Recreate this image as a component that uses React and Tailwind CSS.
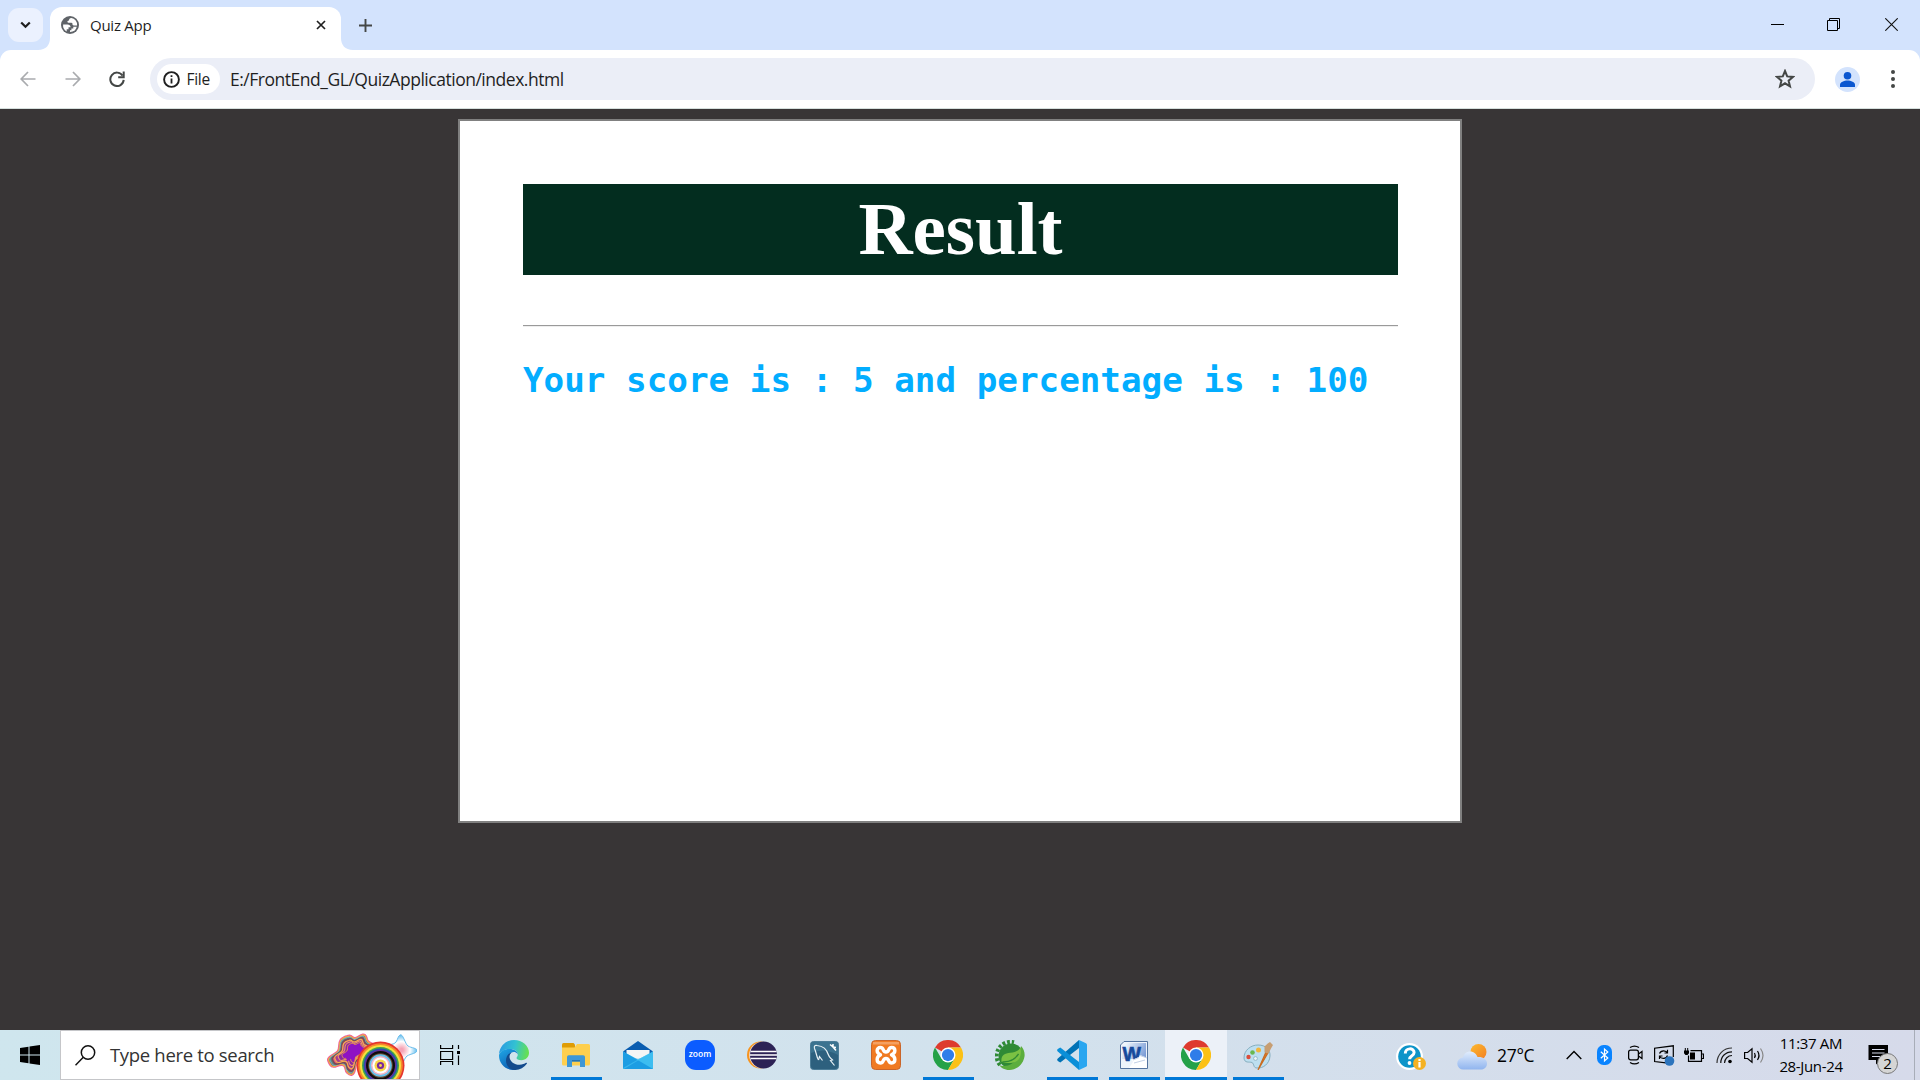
import React from "react";

const UI = "font-['Open_Sans','Noto_Sans',sans-serif]";

function Svg({ w, h, vb, className = "", children }) {
  return (
    <svg width={w} height={h} viewBox={vb || `0 0 ${w} ${h}`} className={`block shrink-0 ${className}`} fill="none">
      {children}
    </svg>
  );
}

/* ---------- Browser chrome ---------- */

function TabStrip() {
  return (
    <div className="flex h-[50px] shrink-0 items-start bg-[#d3e3fd]">
      <div className="ml-2 mt-2 flex h-[34px] w-[35px] items-center justify-center rounded-[11px] bg-[#ebf1fe]">
        <Svg w={11} h={8}>
          <path d="M1.2 1.4 5.5 5.8 9.8 1.4" stroke="#1f1f1f" strokeWidth="2.2" />
        </Svg>
      </div>
      <Svg w={12} h={12} className="-ml-[5px] mt-[38px] mr-0">
        <path d="M12 0v12H0C8 12 12 7 12 0Z" fill="#fff" />
      </Svg>
      <div className="mt-[7px] flex h-[43px] w-[291px] items-center rounded-t-[12px] bg-white pl-[11px] pr-[15px]">
        <Svg w={18} h={18} className="-mt-[7px]">
          <circle cx="9" cy="9" r="9" fill="#5f6368" />
          <path d="M10.300 1.900c-1.600.3-2.200 1-2.200 2 0 .9-1.700.4-1.700 1.500 0 1 .7 1.300 1.700 1.300h2.300c1 0 1.100.8 1.100 1.800 0 .9 1 .9 2 .9h2.600A6.900 6.900 0 0 0 10.300 1.900Z" fill="#fff" />
          <path d="M2.100 8.600h4.300c1.900 0 3.200 1 3.200 2.700H7.500v2h-1.800v2.200a7 7 0 0 1-3.600-6.900ZM9 15.900v-1.600h1.400v-1.800h1.900v-1.800h3.500A7 7 0 0 1 9 15.900Z" fill="#fff" />
        </Svg>
        <span className={`${UI} ml-[11px] -mt-[7px] grow whitespace-nowrap text-[15px] leading-5 tracking-[-0.25px] text-[#1f1f1f]`}>Quiz App</span>
        <Svg w={10} h={10} className="-mt-[7px]">
          <path d="m1 1 8 8M9 1 1 9" stroke="#1f1f1f" strokeWidth="1.7" />
        </Svg>
      </div>
      <Svg w={12} h={12} className="mt-[38px]">
        <path d="M0 0v12h12C4 12 0 7 0 0Z" fill="#fff" />
      </Svg>
      <Svg w={13} h={13} className="ml-[6px] mt-[19px]">
        <path d="M6.500 0v13M0 6.500h13" stroke="#444746" strokeWidth="1.900" />
      </Svg>
      <div className="ml-auto flex items-center pt-[18px] pr-[22px]">
        <Svg w={13} h={13}>
          <path d="M0 6.500h13" stroke="#000" />
        </Svg>
        <Svg w={13} h={13} className="ml-[43px]">
          <path d="M.5 2.500h10v10H.5zM2.500 2.500v-2h10v10h-2" stroke="#000" />
        </Svg>
        <Svg w={13} h={13} className="ml-[45px]">
          <path d="m.3.3 12.400 12.400M12.700.3.3 12.700" stroke="#111" strokeWidth="1.100" />
        </Svg>
      </div>
    </div>
  );
}

function Toolbar() {
  return (
    <div className="bg-[#d3e3fd]">
      <div className="flex h-[59px] items-center rounded-t-[11px] border-b border-[#d5dfdd] bg-white pl-[20px]">
        <Svg w={16} h={16}>
          <path d="M15.500 8H1.500M8 1 1.200 8 8 15" stroke="#a9abae" strokeWidth="1.700" />
        </Svg>
        <Svg w={16} h={16} className="ml-[29px]">
          <path d="M.5 8h14M8 1l6.800 7L8 15" stroke="#a9abae" strokeWidth="1.700" />
        </Svg>
        <Svg w={16} h={16} className="ml-[28px]">
          <path d="M13.600 4.600A6.700 6.700 0 1 0 14.700 8.900" stroke="#444746" strokeWidth="2" />
          <path d="M14.700.5v5.700H9.200" stroke="#444746" strokeWidth="2" />
        </Svg>
        <div className="ml-[25px] flex h-[42px] w-[1665px] items-center rounded-full bg-[#ebeef7] pl-[7px] pr-[20px]">
          <div className="flex h-[30px] w-[63px] items-center rounded-full bg-white pl-[5.500px]">
            <Svg w={17} h={17}>
              <circle cx="8.500" cy="8.500" r="7.400" stroke="#1f1f1f" strokeWidth="1.900" />
              <path d="M8.500 7.500v5M8.500 4.200V6" stroke="#1f1f1f" strokeWidth="1.800" />
            </Svg>
            <span className={`${UI} ml-[7px] text-[15.500px] font-medium leading-5 tracking-[-0.3px] text-[#1f1f1f]`}>File</span>
          </div>
          <span className={`${UI} ml-[10px] grow whitespace-nowrap text-[17.500px] leading-6 tracking-[-0.480px] text-[#1f1f1f]`}>
            E:/FrontEnd_GL/QuizApplication/index.html
          </span>
          <Svg w={20} h={20}>
            <path d="m10 2 2.200 5.400 5.800.5-4.400 3.800 1.400 5.700-5-3.100-5 3.100 1.400-5.700L2 7.900l5.800-.5Z" stroke="#444746" strokeWidth="2" />
          </Svg>
        </div>
        <Svg w={25} h={25} className="ml-[20px]">
          <circle cx="12.500" cy="12.500" r="12.500" fill="#d3e3fd" />
          <circle cx="12.500" cy="8.700" r="3.800" fill="#0b57d0" />
          <path d="M5 20v-2.200c0-2.600 4-4.200 7.500-4.200s7.500 1.600 7.500 4.200V20Z" fill="#0b57d0" />
        </Svg>
        <Svg w={4} h={18} className="ml-[30.500px]">
          <circle cx="2" cy="2" r="2" fill="#444746" />
          <circle cx="2" cy="9" r="2" fill="#444746" />
          <circle cx="2" cy="16" r="2" fill="#444746" />
        </Svg>
      </div>
    </div>
  );
}

/* ---------- Page ---------- */

function ResultPage() {
  return (
    <main className="flex grow items-start justify-center bg-[#383536] pt-[10px]">
      <section className="h-[704px] w-[1004px] border-2 border-[#808080] bg-white pl-[63px] pr-[62px] pt-[63px]">
        <h1 className="h-[91px] bg-[#032d1f] text-center font-['Liberation_Serif',serif] text-[75px] font-bold leading-[90px] text-white">Result</h1>
        <div className="mt-[50px] h-[2px] border-b border-t border-b-[#eeeeee] border-t-[#9a9a9a]" />
        <p className="mt-[33px] whitespace-nowrap font-['DejaVu_Sans_Mono',monospace] text-[34.250px] font-bold leading-[40px] text-[#02adff]">
          Your score is : 5 and percentage is : 100
        </p>
      </section>
    </main>
  );
}

/* ---------- Taskbar icons ---------- */

function Edge() {
  return (
    <Svg w={30} h={30}>
      <defs>
        <linearGradient id="eg1" x1="2" y1="6" x2="29" y2="12" gradientUnits="userSpaceOnUse">
          <stop stopColor="#2a9fe0" />
          <stop offset=".5" stopColor="#33c2d2" />
          <stop offset="1" stopColor="#66e052" />
        </linearGradient>
        <linearGradient id="eg2" x1="0" y1="10" x2="12" y2="30" gradientUnits="userSpaceOnUse">
          <stop stopColor="#1fa6e6" />
          <stop offset="1" stopColor="#0c5bb0" />
        </linearGradient>
      </defs>
      <path d="M0 14C.8 6 7 0 15 0c8.500 0 15 6 15 12.800 0 4.200-3.300 7.400-7.500 7.400-3.400 0-5-1.100-5-2.100 0-.8 1.300-1.400 1.300-3.500 0-3-3-5.700-7.600-5.700C5.500 8.900 1.200 11.500 0 14Z" fill="url(#eg1)" />
      <path d="M0 15.500C.2 11.500 5 8.900 10.500 8.900c5 0 8.300 2.600 8.300 5.500-1-1.900-2.800-2.400-4.100-2.400-3.500 0-5.200 3.200-5.200 6.500 0 5.500 4 9.500 9.500 9.500-1.200 1.300-3 2-5 2C6 29.500 0 23.500 0 15.500Z" fill="url(#eg2)" />
      <path d="M13 12.200c-2 1.300-2.600 3.300-2.400 5.200.5 4 4.500 7.300 10 7.300 2.800 0 5-.9 6.400-1.900.7-.4 1.300.2.8.9A15 15 0 0 1 15 30c-5-1-8-5-8-9.500 0-4 2.400-7.300 6-8.300Z" fill="#134a8c" />
    </Svg>
  );
}

function Folder() {
  return (
    <Svg w={28} h={24}>
      <path d="M0 1.500Q0 0 1.500 0h10l1.500 1.500V8H0Z" fill="#df9c05" />
      <path d="M0 4.500h12.500L15 1h11.500Q28 1 28 2.500V21q0 1.500-1.500 1.500h-25Q0 22.500 0 21Z" fill="#fecf4e" />
      <path d="M5 24V14q0-1.800 1.800-1.800h14.400q1.800 0 1.800 1.800v10h-5v-5.500h-8V24Z" fill="#3d97d6" />
      <path d="M10 18.500h8V17h-8z" fill="#2674ae" />
    </Svg>
  );
}

function Mail() {
  return (
    <Svg w={30} h={29}>
      <path d="M0 10.500 15 0l15 10.500L26 14H4Z" fill="#0a5db0" />
      <path d="M3.500 9h23v8H3.500z" fill="#f5f5f5" />
      <path d="M0 10.500 15 18.500l15-8V28H0Z" fill="#3dbdf0" />
      <path d="M0 10.500 30 28H1.500Q0 28 0 26.500Z" fill="#1d9de3" />
      <path d="M15 18.500 30 10.500 1 28H0v-1Z" fill="#47c5f4" opacity=".6" />
    </Svg>
  );
}

function Zoom() {
  return (
    <div className={`${UI} flex h-[30px] w-[30px] items-center justify-center rounded-[11px] bg-[#0b5cff] text-[8.500px] font-semibold leading-none text-white`}>
      <span className="-mt-[2px]">zoom</span>
    </div>
  );
}

function Eclipse() {
  return (
    <Svg w={30} h={28}>
      <circle cx="13.500" cy="14" r="13.500" fill="#f7941e" />
      <circle cx="15.500" cy="14" r="13.300" fill="#e9e4ee" />
      <circle cx="16.500" cy="14" r="13.500" fill="#2c2255" />
      <path d="M3.500 10.500h26M3 14h27M3.500 17.500h26" stroke="#fff" strokeWidth="1.700" />
    </Svg>
  );
}

function MySql() {
  return (
    <Svg w={29} h={29}>
      <rect x=".5" y=".5" width="28" height="28" rx="3" fill="#2d607e" stroke="#4b7c97" />
      <path d="M1 12Q14 6 28 14V4q0-3-3-3H4Q1 1 1 4Z" fill="#45809c" opacity=".6" />
      <path d="M8.500 19C6.500 16 6.500 12 4.500 7.500c-.7-2.500.5-3.500 2.500-3C13 5 17 9 18.500 14c.7 2.500 2.500 3.500 4 5l-2 .5 4 5" stroke="#e8f1f5" strokeWidth="1.200" />
      <path d="m8.500 19 1-3.500 3 4" stroke="#e8f1f5" strokeWidth="1.200" />
      <path d="m20 3.500 3 2.500 3 3.500M23 3v3l3 .5" stroke="#fff" strokeWidth="1.500" />
    </Svg>
  );
}

function Xampp() {
  return (
    <Svg w={30} h={30}>
      <rect x=".5" y=".5" width="29" height="29" rx="4" fill="#f07a22" stroke="#c9652a" />
      <path d="M2 2h26v2.500H2z" fill="#f7b07c" opacity=".7" />
      <path d="M9.500 14.800C5 13 5 7.500 9.500 7.500c3.500 0 2 4.500 5.500 4.500s2-4.500 5.500-4.500c4.500 0 4.500 5.500 0 7.300 4.500 1.800 4.500 8.200 0 8.200-3.500 0-2-4.500-5.500-4.500s-2 4.500-5.500 4.500c-4.500 0-4.500-6.400 0-8.200Z" stroke="#fff" strokeWidth="3.400" strokeLinejoin="round" />
    </Svg>
  );
}

function Chrome() {
  return (
    <Svg w={30} h={30} vb="0 0 48 48">
      <path d="M24 24 3.200 12A24 24 0 0 1 44.800 12H24Z" fill="#de3b2e" />
      <path d="M3.200 12A24 24 0 0 0 24 48L34.400 30 24 24 13.600 30Z" fill="#24a148" />
      <path d="M24 48A24 24 0 0 0 44.800 12H24l10.400 18Z" fill="#fbc116" />
      <circle cx="24" cy="24" r="12" fill="#fff" />
      <circle cx="24" cy="24" r="9.800" fill="#2f7de9" />
    </Svg>
  );
}

function Spring() {
  return (
    <Svg w={30} h={30}>
      <path d="M5 25A14 14 0 0 1 19 2.300" stroke="#2f8a35" strokeWidth="4" strokeDasharray="2.800 1.900" />
      <circle cx="16" cy="16" r="12.500" fill="#2f8a35" />
      <path d="M26 6c3 3 4 7 3.500 10.500C28 25 21 30 14.500 30 9 30 6 27.500 4 25 12 28 24 24 26 6Z" fill="#5cae3e" />
      <path d="M25.500 7.500c1.500 8-1 14-8 15.300-4 .6-8 .2-11-1-.8-6 2.800-8.500 8.800-9C20 12.300 23.500 11 25.500 7.500Z" fill="#7ac143" />
      <path d="M7.500 21.800c6.500.3 12.500-2 16-8" stroke="#2f8a35" strokeWidth="1.400" />
    </Svg>
  );
}

function VsCode() {
  return (
    <Svg w={30} h={30}>
      <path d="M22 0v8L3.300 22.500.8 21q-1.300-1.200 0-2.500Z" fill="#0072b5" />
      <path d="M22 30v-8L3.300 7.500.8 9q-1.300 1.200 0 2.500Z" fill="#0a8fd8" />
      <path d="m22 0 7 3.200q1 .5 1 1.500v20.600q0 1-1 1.500L22 30Z" fill="#2aa6f0" />
    </Svg>
  );
}

function Word() {
  return (
    <Svg w={28} h={28}>
      <defs>
        <linearGradient id="wd" x1="0" y1="0" x2="28" y2="16" gradientUnits="userSpaceOnUse">
          <stop offset=".2" stopColor="#eef5fc" />
          <stop offset="1" stopColor="#6a8fd0" />
        </linearGradient>
      </defs>
      <path d="M4 .5h23.500v27H.5V4Z" fill="#eef4fb" stroke="#55749f" />
      <path d="M4.500 2H26v16H2V4.500Z" fill="url(#wd)" />
      <text x="2.500" y="19.500" fontFamily="Liberation Sans" fontWeight="700" fontSize="19.500" fill="#164a9c" stroke="#164a9c" strokeWidth=".6">W</text>
      <path d="m12 19 7-3 1-2 7 3v10H9l4-6Z" fill="#fff" />
      <path d="m20 14.500 7 2.500M13 19l6-2.500M14 22l11-3" stroke="#c3d1e6" />
    </Svg>
  );
}

function Paint() {
  return (
    <Svg w={30} h={29}>
      <path d="M1 17C1 9 8 4 15 4c8 0 12.500 5 12 11-.5 8-7 12.500-13 12-4 0-2.500-4-5-5.500C6 20.500 1.500 22.500 1 17Z" fill="#bddff0" stroke="#85aebf" />
      <circle cx="5.500" cy="16" r="2.200" fill="#db4d3c" />
      <circle cx="9.500" cy="11.500" r="2.300" fill="#69b851" />
      <circle cx="15.500" cy="9" r="2.500" fill="#f2b63c" />
      <circle cx="12.500" cy="17.500" r="1.900" fill="#eef7fb" stroke="#86aec0" strokeWidth=".8" />
      <path d="m15 29 8-18 2 .8Z" fill="#d97b2b" stroke="#c96d22" strokeWidth="1.200" />
      <path d="m21.500 11.500 0-6 3.200-3L27 1l3 3-2 3.500-2.500 5Z" fill="#c79e72" />
    </Svg>
  );
}

const APPS = [
  [Edge, "none"], [Folder, "open"], [Mail, "none"], [Zoom, "none"], [Eclipse, "none"], [MySql, "none"], [Xampp, "none"],
  [Chrome, "open"], [Spring, "none"], [VsCode, "open"], [Word, "open"], [Chrome, "active"], [Paint, "open"],
];

function AppButton({ Icon, state }) {
  return (
    <div className={`flex h-[50px] w-[62px] flex-col items-center ${state === "active" ? "bg-[#ecf1f8]" : ""}`}>
      <div className="flex h-[47px] items-center justify-center pt-[3px]">
        <Icon />
      </div>
      {state !== "none" && <div className={`h-[3px] bg-[#0078d7] ${state === "active" ? "w-full" : "w-[51px]"}`} />}
    </div>
  );
}

const BLOB =
  "M20 4C25 2 24 7 28 6S36 0 38 4 38 9 43 11 50 16 47 22 38 24 33 27 28 31 27 37 23 43 20 40 20 33 15 32 6 37 3 32 0 26 5 23 12 19 12 14 13 6 20 4Z";

function SearchArt() {
  return (
    <Svg w={92} h={49}>
      <defs>
        <radialGradient id="star">
          <stop offset=".1" stopColor="#f5a3b5" />
          <stop offset=".55" stopColor="#fff" />
          <stop offset="1" stopColor="#5fbcee" />
        </radialGradient>
      </defs>
      <path d="M75 4c3-2 5 9 8 11s10 2 9 5-9 3-11 6-4 9-7 8-2-8-5-11-9-4-8-7 8-2 10-5 2-6 4-7Z" fill="url(#star)" stroke="#6bbdec" />
      <g transform="translate(2.500 1.500)">
        <path d={BLOB} fill="#ee5ba0" stroke="#ee5ba0" strokeWidth="3" />
        <path d={BLOB} fill="#7c6a72" stroke="#f3a545" strokeWidth="1.400" />
        <path transform="translate(1.500 1.300) scale(.93)" d={BLOB} fill="#5f7f7a" stroke="#6cb8c9" strokeWidth="1" />
        <path transform="translate(4 3.300) scale(.84)" d={BLOB} fill="#e9607c" stroke="#7a4a58" strokeWidth="2" />
        <path transform="translate(6.500 5) scale(.74)" d={BLOB} fill="#a33a94" stroke="#f5b04a" strokeWidth="1.600" />
        <path transform="translate(10 7) scale(.62)" d={BLOB} fill="#8a2a9c" stroke="#f0986a" strokeWidth="1.700" />
        <path transform="translate(14 9) scale(.5)" d={BLOB} fill="#8f12c4" stroke="#f3a545" strokeWidth="1.600" />
        <path d="M22 14h12v7l-8 3-6 5-2-5 4-4Z" fill="#8f12c4" />
      </g>
      {[["#e5352f", 24], ["#f58a2c", 22.300], ["#f7e13c", 20.500], ["#3fa34d", 18.500], ["#2c4fb0", 17], ["#6d2c91", 15.500], ["#0d0d0d", 14.500], ["#6b4a2f", 12.300], ["#67c1ea", 11.300], ["#f6b4c6", 9.500], ["#fff", 8], ["#f8d54a", 6], ["#7a2a9b", 3.600], ["#f8d54a", 1.400]].map(([c, r], i) => (
        <circle key={i} cx="55.500" cy="34.500" r={r} fill={c} />
      ))}
    </Svg>
  );
}

function Taskbar() {
  return (
    <footer className={`${UI} flex h-[50px] shrink-0 items-center bg-linear-to-r from-[#cfe6ee] via-[#d2e2ed] to-[#d6daea] text-black`}>
      <div className="flex w-[60px] justify-center">
        <Svg w={20} h={20}>
          <path d="M0 3 8.500 1.800V9.600H0ZM9.500 1.600 20 0v9.600H9.500ZM0 10.500h8.500v7.800L0 17.100ZM9.500 10.500H20V20L9.500 18.500Z" fill="#000" />
        </Svg>
      </div>
      <div className="flex h-[50px] w-[360px] items-center overflow-hidden border border-[#c5c6c9] bg-white pl-[14px]">
        <Svg w={21} h={21}>
          <circle cx="13" cy="7.500" r="6.700" stroke="#111" strokeWidth="1.500" />
          <path d="M8.300 12.300.5 20.200" stroke="#111" strokeWidth="1.500" />
        </Svg>
        <span className="ml-[14px] w-[215px] whitespace-nowrap text-[18.500px] leading-6 tracking-[-0.32px] text-[#333]">Type here to search</span>
        <SearchArt />
      </div>
      <Svg w={20} h={20} className="ml-[20px]">
        <path d="M.6 0v3.500h12V0M.6 20v-3.500h12V20M.6 6.500h12v8H.6z" stroke="#000" strokeWidth="1.200" />
        <path d="M18.500 0v4M18.500 10.500V20" stroke="#000" strokeWidth="1.200" />
        <path d="M17 6h3v3h-3z" fill="#000" />
      </Svg>
      <nav className="ml-[23px] flex">
        {APPS.map(([Icon, state], i) => (
          <AppButton key={i} Icon={Icon} state={state} />
        ))}
      </nav>
      <Svg w={30} h={29} className="ml-[107px] mt-1">
        <circle cx="13.500" cy="13.500" r="13.500" fill="#fff" />
        <circle cx="13.500" cy="13.500" r="11.300" fill="#0d94c9" />
        <path d="M9.300 10.500c0-6 8.800-6 8.800-1 0 3.500-4.500 3-4.500 6.800" stroke="#fff" strokeWidth="3" />
        <circle cx="13.500" cy="20" r="1.900" fill="#fff" />
        <circle cx="23.500" cy="20.500" r="6.500" fill="#f4b223" />
        <path d="M23.500 19v5.500M23.500 16v2" stroke="#fff" strokeWidth="2.200" />
      </Svg>
      <Svg w={31} h={26} className="ml-[31px] mt-[3px]">
        <defs>
          <linearGradient id="cl" x1="0" y1="8" x2="0" y2="26" gradientUnits="userSpaceOnUse">
            <stop stopColor="#dfebfc" />
            <stop offset="1" stopColor="#8eb3ee" />
          </linearGradient>
          <linearGradient id="sn" x1="14" y1="0" x2="28" y2="16" gradientUnits="userSpaceOnUse">
            <stop stopColor="#fdb92e" />
            <stop offset="1" stopColor="#f28024" />
          </linearGradient>
        </defs>
        <circle cx="21.500" cy="8" r="8" fill="url(#sn)" />
        <path d="M6.500 25.500a6 6 0 0 1-.5-12C7 9.500 10 7.500 13 7.500c4 0 6.500 2.500 7.500 5.500 5-.5 9.500 2 9.500 6.500 0 3.500-2.500 6-6 6Z" fill="url(#cl)" />
      </Svg>
      <span className="ml-[9px] w-[40px] whitespace-nowrap text-[17.500px] leading-6 tracking-[-0.3px]">27°C</span>
      <Svg w={16} h={10} className="ml-[29px]">
        <path d="M.7 9 8 1.500 15.300 9" stroke="#000" strokeWidth="1.400" />
      </Svg>
      <Svg w={15} h={20} className="ml-[15px]">
        <rect width="15" height="20" rx="6.500" fill="#0a84ff" />
        <path d="m3.800 6.800 7 6.200-3.300 3V4l3.300 3-7 6.200" stroke="#fff" strokeWidth="1.200" />
      </Svg>
      <Svg w={15} h={20} className="ml-[16px]">
        <path d="M2 2.500Q6.500-.3 11 2.500M2 17.500q4.500 2.800 9 0" stroke="#000" strokeWidth="1.200" />
        <rect x=".6" y="5.200" width="9.800" height="9.600" rx="2" stroke="#000" strokeWidth="1.300" />
        <path d="m10.500 9 3.500-2.500v7L10.500 11" stroke="#000" strokeWidth="1.200" />
      </Svg>
      <Svg w={21} h={21} className="ml-[11px]">
        <path d="M12 17.800.6 16.500V3.200L19.300.8V12" stroke="#000" strokeWidth="1.200" />
        <path d="M5.500 8.500C7 5 12 5 13.500 8M13.500 4.800V8h-3M13.500 10.500c-1 3.500-6 4-8 .8M5.500 14v-3h3" stroke="#000" strokeWidth="1.200" />
        <circle cx="15.500" cy="16" r="4.800" fill="#2c74bd" />
      </Svg>
      <Svg w={20} h={15} className="ml-[9px]">
        <path d="M4.500 7.500v5.900h13V2.600h-11M17.500 6h2v4.500h-2" stroke="#000" strokeWidth="1.200" />
        <path d="M6 4.500h5v7H6zM0 2.500h5v2.800L3.500 7h-2L0 5.300Z" fill="#000" />
        <path d="M1.300 0v3M3.700 0v3" stroke="#000" />
      </Svg>
      <Svg w={17} h={17} className="ml-[12px]">
        <path d="M1 16C1 7.500 7.500 1 16 1" stroke="#333" strokeWidth="1.200" />
        <path d="M4.800 16C4.800 9.500 9.500 4.800 16 4.800M8.500 16c0-4 3.500-7.500 7.500-7.500" stroke="#111" strokeWidth="1.200" />
        <circle cx="14" cy="14.500" r="1.800" fill="#000" />
      </Svg>
      <Svg w={20} h={17} className="ml-[11px]">
        <path d="M.6 5.500h3L8 1.800v13.400l-4.400-3.700h-3Z" stroke="#000" strokeWidth="1.200" />
        <path d="M10.500 6q1.500 2.500 0 5M13.500 4q3 4.500 0 9" stroke="#000" strokeWidth="1.200" />
        <path d="M16.500 1.500q5 7 0 14" stroke="#888" strokeWidth="1.200" />
      </Svg>
      <div className="ml-[9px] flex w-[76px] flex-col items-center whitespace-nowrap text-[15px] leading-[23px] tracking-[-0.350px]">
        <span>11:37 AM</span>
        <span>28-Jun-24</span>
      </div>
      <div className="relative ml-[19px] h-[30px] w-[32px]">
        <Svg w={21} h={20} className="mt-[5px]">
          <path d="M.5 0h19.500v15h-7.500L8 19.500V15H.5Z" fill="#000" />
          <path d="M4 4.500h12.500M4 8h12.500M4 11.500h8" stroke="#d6daea" strokeWidth="1.200" />
        </Svg>
        <div className="absolute left-[9px] top-[13px] flex h-[21px] w-[21px] items-center justify-center rounded-full border border-[#777] bg-[#d5d5d5] text-[15px] leading-none">2</div>
      </div>
      <div className="ml-auto h-[50px] w-[6px] border-l border-[#a8adb8]" />
    </footer>
  );
}

export default function App() {
  return (
    <div className="flex h-[1080px] w-[1920px] flex-col overflow-hidden">
      <TabStrip />
      <Toolbar />
      <ResultPage />
      <Taskbar />
    </div>
  );
}
